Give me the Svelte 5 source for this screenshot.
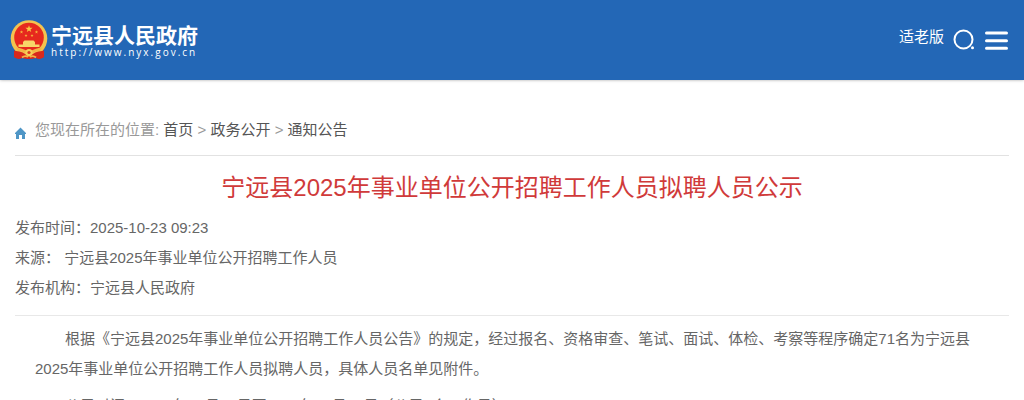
<script>
    const siteName = "宁远县人民政府";
    const siteUrl = "http://www.nyx.gov.cn";

    const crumbs = ["首页", "政务公开", "通知公告"];

    const title = "宁远县2025年事业单位公开招聘工作人员拟聘人员公示";

    const meta = [
        { label: "发布时间：", value: "2025-10-23 09:23" },
        { label: "来源：", value: " 宁远县2025年事业单位公开招聘工作人员" },
        { label: "发布机构：", value: "宁远县人民政府" },
    ];

    const paragraphs = [
        "根据《宁远县2025年事业单位公开招聘工作人员公告》的规定，经过报名、资格审查、笔试、面试、体检、考察等程序确定71名为宁远县2025年事业单位公开招聘工作人员拟聘人员，具体人员名单见附件。",
        "公示时间：2025年10月23日至2025年10月29日（公示5个工作日）",
    ];

    // Points of a five-pointed star around (cx, cy)
    function star(cx, cy, r) {
        const points = [];
        for (let i = 0; i < 10; i++) {
            const radius = i % 2 ? r * 0.4 : r;
            const angle = (Math.PI / 5) * i - Math.PI / 2;
            points.push(`${cx + radius * Math.cos(angle)},${cy + radius * Math.sin(angle)}`);
        }
        return points.join(" ");
    }
</script>

<header class="header">
    <a class="brand" href="#home">
        <svg class="emblem" viewBox="0 0 38 40" aria-hidden="true">
            <path d="M5 26 L4 37 Q8 40 12 38 L19 39 L26 38 Q30 40 34 37 L33 26 Z" fill="#d9291c" />
            <circle cx="19" cy="18.5" r="18.3" fill="#f3c34f" />
            <circle cx="19" cy="17.5" r="14.8" fill="#e6281e" />
            <polygon points={star(19, 9, 3.8)} fill="#f8c944" />
            <polygon points={star(11.5, 12, 1.8)} fill="#f8b83e" />
            <polygon points={star(26.5, 12, 1.8)} fill="#f8b83e" />
            <polygon points={star(16, 15.5, 1.6)} fill="#f8b83e" />
            <polygon points={star(22, 15.5, 1.6)} fill="#f8b83e" />
            <path d="M13 22 L14.5 20.5 H23.5 L25 22 V24.5 H29.5 V27 H8.5 V24.5 H13 Z" fill="#f8d568" />
            <path d="M6 27.5 Q13 28 19 32 Q25 28 32 27.5 L30 31 Q24 31 19 35 Q14 31 8 31 Z" fill="#f3b545" />
            <path d="M4 31 Q12 30 19 37 Q26 30 34 31 L34 37 Q30 40 26 38 L19 39 L12 38 Q8 40 4 37 Z" fill="#d9291c" />
            <circle cx="19" cy="32.5" r="3.6" fill="#f6cf58" />
            <circle cx="19" cy="32.5" r="1.6" fill="#dd3a20" />
            <path d="M12 37.5 Q15 35 18 37 M26 37.5 Q23 35 20 37" fill="none" stroke="#f3b545" stroke-width="1.8" />
        </svg>
        <span class="brand-text">
            <span class="name">{siteName}</span>
            <span class="url">{siteUrl}</span>
        </span>
    </a>

    <div class="tools">
        <a class="elder" href="#elder">适老版</a>
        <button class="tool" type="button" aria-label="搜索">
            <svg width="22" height="22" viewBox="0 0 22 22" aria-hidden="true">
                <circle cx="10.5" cy="10.5" r="9" fill="none" stroke="currentColor" stroke-width="2" />
                <circle cx="19.5" cy="18.7" r="1.5" fill="currentColor" />
            </svg>
        </button>
        <button class="tool" type="button" aria-label="菜单">
            <svg width="24" height="22" viewBox="0 0 24 22" aria-hidden="true">
                <path d="M2.5 4 H22.5 M2.5 11.7 H22.5 M2.5 19.3 H22.5" stroke="currentColor" stroke-width="3" stroke-linecap="round" />
            </svg>
        </button>
    </div>
</header>

<main class="page">
    <nav class="crumbs">
        <svg class="home" viewBox="0 0 12 12" aria-hidden="true">
            <path d="M5.5 0.5 L11 6 V7 H10 V12 H7 V8 H4 V12 H1 V7 H0 V6 Z" fill="#4f96c6" />
        </svg>
        <span>
            您现在所在的位置:
            {#each crumbs as crumb, i}
                {#if i > 0}{" > "}{/if}<a href="#crumb">{crumb}</a>
            {/each}
        </span>
    </nav>

    <article>
        <h1>{title}</h1>
        <ul class="meta">
            {#each meta as item}
                <li>{item.label}{item.value}</li>
            {/each}
        </ul>
        <div class="content">
            {#each paragraphs as text}
                <p>{text}</p>
            {/each}
        </div>
    </article>
</main>

<style>
    :global(body) {
        margin: 0;
        background: #fff;
        color: #666;
        font-family: "Liberation Sans", "Noto Sans CJK SC", sans-serif;
        font-size: 15px;
        line-height: 30px;
    }

    a {
        color: inherit;
        text-decoration: none;
    }

    .header {
        display: flex;
        align-items: center;
        justify-content: space-between;
        height: 80px;
        padding: 0 16px 0 10px;
        box-sizing: border-box;
        background: #2367b6;
        box-shadow: 0 0 3px rgba(0, 0, 0, 0.35);
        color: #fff;
    }

    .brand {
        display: flex;
        align-items: center;
        gap: 3px;
    }
    .emblem {
        width: 38px;
        height: 40px;
    }
    .brand-text {
        display: flex;
        flex-direction: column;
    }
    .name {
        font-family: "Noto Sans CJK SC", sans-serif;
        font-size: 21px;
        font-weight: 700;
        line-height: 24px;
    }
    .url {
        font-family: "Open Sans", sans-serif;
        font-size: 10px;
        line-height: 12px;
        letter-spacing: 2px;
    }

    .tools {
        display: flex;
        align-items: center;
        gap: 9px;
    }
    .elder {
        padding-bottom: 6px;
    }
    .tool {
        display: flex;
        padding: 0;
        border: 0;
        background: none;
        color: #fff;
        cursor: pointer;
    }

    .page {
        padding: 35px 15px 0;
    }

    .crumbs {
        display: flex;
        align-items: center;
        gap: 8px;
        padding-bottom: 10px;
        border-bottom: 1px solid #e2e2e2;
        color: #999;
    }
    .crumbs a {
        color: #555;
    }
    .home {
        width: 12px;
        height: 12px;
        padding-top: 6px;
    }

    h1 {
        margin: 12px 0 5px;
        color: #d03a3a;
        font-size: 24px;
        font-weight: 400;
        line-height: 40px;
        text-align: center;
    }

    .meta {
        margin: 0;
        padding: 0 0 12px;
        border-bottom: 1px solid #e8e8e8;
        list-style: none;
    }

    .content {
        padding: 8px 20px;
    }
    .content p {
        margin: 0 0 7px;
        text-indent: 2em;
    }
</style>
